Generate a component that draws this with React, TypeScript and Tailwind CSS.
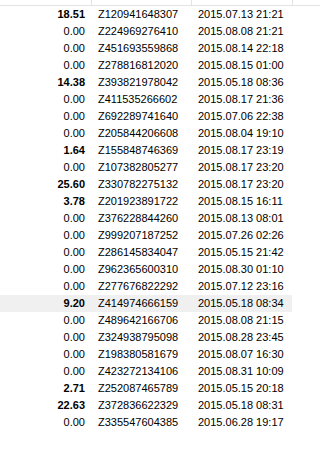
const rows: [string, string, string][] = [
  ["18.51", "Z120941648307", "2015.07.13 21:21"],
  ["0.00", "Z224969276410", "2015.08.08 21:21"],
  ["0.00", "Z451693559868", "2015.08.14 22:18"],
  ["0.00", "Z278816812020", "2015.08.15 01:00"],
  ["14.38", "Z393821978042", "2015.05.18 08:36"],
  ["0.00", "Z411535266602", "2015.08.17 21:36"],
  ["0.00", "Z692289741640", "2015.07.06 22:38"],
  ["0.00", "Z205844206608", "2015.08.04 19:10"],
  ["1.64", "Z155848746369", "2015.08.17 23:19"],
  ["0.00", "Z107382805277", "2015.08.17 23:20"],
  ["25.60", "Z330782275132", "2015.08.17 23:20"],
  ["3.78", "Z201923891722", "2015.08.15 16:11"],
  ["0.00", "Z376228844260", "2015.08.13 08:01"],
  ["0.00", "Z999207187252", "2015.07.26 02:26"],
  ["0.00", "Z286145834047", "2015.05.15 21:42"],
  ["0.00", "Z962365600310", "2015.08.30 01:10"],
  ["0.00", "Z277676822292", "2015.07.12 23:16"],
  ["9.20", "Z414974666159", "2015.05.18 08:34"],
  ["0.00", "Z489642166706", "2015.08.08 21:15"],
  ["0.00", "Z324938795098", "2015.08.28 23:45"],
  ["0.00", "Z198380581679", "2015.08.07 16:30"],
  ["0.00", "Z423272134106", "2015.08.31 10:09"],
  ["2.71", "Z252087465789", "2015.05.15 20:18"],
  ["22.63", "Z372836622329", "2015.05.18 08:31"],
  ["0.00", "Z335547604385", "2015.06.28 19:17"],
];

export default function App() {
  const selected = 17;

  return (
    <div className="w-[320px] h-[452px] bg-white text-black text-[11px] overflow-hidden font-['Liberation_Sans',Arial,sans-serif]">
      {/* header strip */}
      <div className="grid grid-cols-[92px_100px_101px_27px] h-[6px] border-b border-[#e3e3e3]">
        <div className="border-r border-[#e3e3e3]" />
        <div className="border-r border-[#e3e3e3]" />
        <div className="border-r border-[#e3e3e3]" />
        <div />
      </div>
      {rows.map((r, i) => {
        const bold = r[0] !== "0.00";
        return (
          <div
            key={i}
            className={
              "grid grid-cols-[92px_100px_100px] h-[17px] w-[292px] items-center leading-none " +
              (i === selected ? "bg-[#f0f0f0]" : "")
            }
          >
            <div className={"text-right pr-[7px] " + (bold ? "font-bold" : "")}>{r[0]}</div>
            <div className="pl-[6px]">{r[1]}</div>
            <div className="pl-[6px]">{r[2]}</div>
          </div>
        );
      })}
    </div>
  );
}
